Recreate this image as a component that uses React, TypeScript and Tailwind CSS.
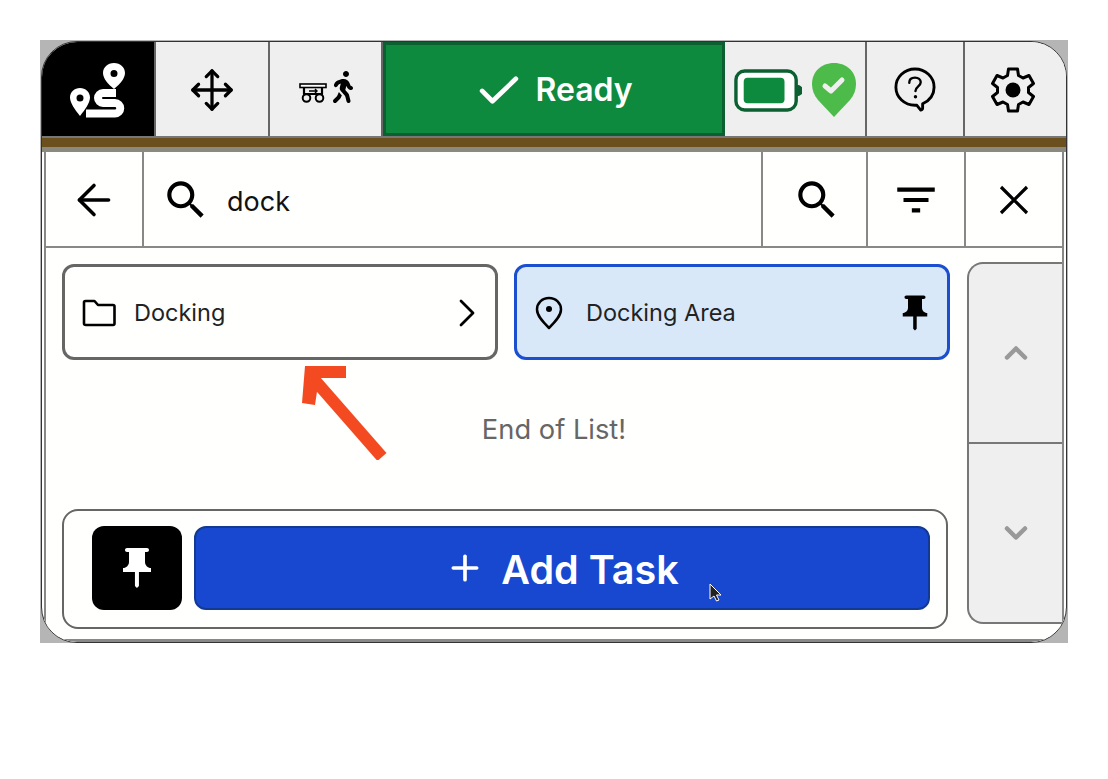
import { ArrowLeft, ChevronDown, ChevronUp, Move, Plus } from "lucide-react";
import { FaWalking } from "react-icons/fa";
import { MdFilterList, MdPushPin, MdSearch } from "react-icons/md";

const RouteIcon = () => (
  <svg width="58" height="58" viewBox="0 0 58 58" fill="none">
    <path fillRule="evenodd" fill="#fff" d="M45 2c-6.500 0-11 4.500-11 10 0 5.500 5 11 11 16 6-5 11-10.500 11-16 0-5.500-4.500-10-11-10Zm0 7a3.500 3.500 0 1 1 0 7 3.500 3.500 0 0 1 0-7Z" />
    <path fillRule="evenodd" fill="#fff" d="M11 27C5.500 27 1 31 1 36.500c0 5.500 5 12 10 18.500 5-6.500 10-13 10-18.500C21 31 16.500 27 11 27Zm0 6.500a3.500 3.500 0 1 1 0 7 3.500 3.500 0 0 1 0-7Z" />
    <path stroke="#fff" strokeWidth="8" strokeLinejoin="round" d="M47 32H34a5 5 0 0 0 0 10h12a5 5 0 0 1 0 10.500H17" />
  </svg>
);

const CartIcon = () => (
  <svg width="28" height="20" viewBox="0 0 28 20" fill="none" stroke="#000">
    <rect x="1" y="1" width="26" height="3.500" strokeWidth="1.600" fill="#fff" />
    <path strokeWidth="2.200" d="M5 5v6m18-6v6M4 11h20" />
    <path strokeWidth="1.400" d="M10 8h8m-2-2 2 2-2 2" />
    <circle cx="7.500" cy="15" r="3.800" strokeWidth="2" fill="#efefef" />
    <circle cx="20.500" cy="15" r="3.800" strokeWidth="2" fill="#efefef" />
  </svg>
);

const BatteryIcon = () => (
  <svg width="68" height="43" viewBox="0 0 70 44" fill="none">
    <rect x="2" y="2" width="62" height="40" rx="9" fill="#fff" stroke="#0b5f30" strokeWidth="3.500" />
    <rect x="10" y="9" width="42" height="26" rx="4" fill="#0d8a3e" />
    <path d="M65 16a6 6 0 0 1 0 12Z" fill="#0b5f30" />
  </svg>
);

const StatusPin = () => (
  <svg width="46" height="56" viewBox="0 0 46 56">
    <path fill="#4cbb4a" d="M23 1C10 1 1 10 1 22c0 6 2 11 6 16l16 17 16-17c4-5 6-10 6-16C45 10 36 1 23 1Z" />
    <path fill="none" stroke="#efefef" strokeWidth="5" strokeLinecap="round" strokeLinejoin="round" d="m14 24 6 5 11-11" />
  </svg>
);

const HelpIcon = () => (
  <svg width="42" height="46" viewBox="0 0 44 48" fill="none" stroke="#000">
    <path strokeWidth="3" strokeLinejoin="round" d="M22 2C11 2 2 10.500 2 21s9 19 20 19h2l4 5c1 0 2-1 2-2v-4.500C37 35 42 29 42 21 42 10.500 33 2 22 2Z" />
    <path strokeWidth="2.500" strokeLinecap="round" d="M16 16.500c0-3.500 2.500-5.500 6-5.500s6 2 6 5c0 4-5.500 4.500-5.500 9" />
    <circle cx="22.500" cy="31" r="1.800" fill="#000" stroke="none" />
  </svg>
);

const GearIcon = () => (
  <svg width="46" height="46" viewBox="0 0 46 46" fill="none" stroke="#000">
    <path strokeWidth="3" strokeLinejoin="round" d="M18.500 2h9l1 6.500 4.500 2.500 6-2.500 4.500 8-5 4v5l5 4-4.500 8-6-2.500-4.500 2.500-1 6.500h-9l-1-6.500-4.500-2.500-6 2.500-4.500-8 5-4v-5l-5-4 4.500-8 6 2.500 4.500-2.500Z" />
    <circle cx="23" cy="23" r="7.500" fill="#000" stroke="none" />
  </svg>
);

const FolderIcon = () => (
  <svg width="34" height="28" viewBox="0 0 34 28" fill="none">
    <path stroke="#000" strokeWidth="2.600" strokeLinejoin="round" d="M2 3.500c0-1 .5-1.500 1.500-1.500h9l3.500 4h15c1 0 1.500.5 1.500 1.500v17c0 1-.5 1.500-1.500 1.500h-27C2.500 26 2 25.500 2 24.500Z" />
  </svg>
);

const Chevron = () => (
  <svg width="18" height="28" viewBox="0 0 18 28" fill="none">
    <path stroke="#000" strokeWidth="2.800" strokeLinecap="round" strokeLinejoin="round" d="m3 2 12 12L3 26" />
  </svg>
);

const CloseIcon = () => (
  <svg width="30" height="30" viewBox="0 0 30 30" fill="none">
    <path stroke="#000" strokeWidth="3.200" d="m2 2 26 26M28 2 2 28" />
  </svg>
);

const MapPinDot = () => (
  <svg width="28" height="34" viewBox="0 0 28 34" fill="none">
    <path stroke="#000" strokeWidth="2.500" strokeLinejoin="round" d="M14 2C7 2 2 7 2 13.500c0 6 5 11.500 12 18.500 7-7 12-12.500 12-18.500C26 7 21 2 14 2Z" />
    <circle cx="14" cy="13" r="3" fill="#000" />
  </svg>
);

const BarCell = ({ width, children }: { width: string; children: React.ReactNode }) => (
  <div className={`${width} flex items-center justify-center pt-[2px] bg-[#efefef] border-r-2 border-[#666]`}>{children}</div>
);

export default function App() {
  return (
    <div className="w-[1108px] h-[779px] bg-white pl-[40px] pt-[40px] font-['Inter',sans-serif] overflow-hidden">
      <div className="relative w-[1028px] h-[603px] bg-[#b5b5b5] px-[1px] pt-[1px]">
        <div className="w-full h-full flex flex-col bg-[#fffffd] rounded-[36px] border border-[#333] overflow-hidden">
          {/* top bar */}
          <div className="h-[94px] flex shrink-0">
            <div className="w-[114px] flex items-center justify-center pt-[2px] bg-black border-r-2 border-[#666]">
              <RouteIcon />
            </div>
            <BarCell width="w-[114px]">
              <Move size={46} strokeWidth={1.700} />
            </BarCell>
            <BarCell width="w-[113px]">
              <div className="flex items-end pl-[6px] -mt-[6px]">
                <CartIcon />
                <FaWalking size={32} />
              </div>
            </BarCell>
            <div className="w-[342px] flex items-center justify-center gap-[16px] pt-[2px] pl-[4px] bg-[#0d8a3e] border-[3px] border-[#0b5f30] text-white text-[32px] font-semibold">
              <svg width="40" height="30" viewBox="0 0 42 32" fill="none">
                <path stroke="#fff" strokeWidth="5" strokeLinecap="round" strokeLinejoin="round" d="m3 17 11 11L39 4" />
              </svg>
              Ready
            </div>
            <BarCell width="w-[142px]">
              <div className="flex items-center gap-[9px]">
                <BatteryIcon />
                <StatusPin />
              </div>
            </BarCell>
            <BarCell width="w-[98px]">
              <HelpIcon />
            </BarCell>
            <div className="flex-1 flex items-center justify-center pt-[2px] pr-[6px] bg-[#efefef]">
              <GearIcon />
            </div>
          </div>
          {/* strip */}
          <div className="h-[16px] shrink-0 bg-[#6b4f1d] border-t-2 border-b-[5px] border-t-[#777] border-b-[#8a8a80]" />

          {/* panel */}
          <div className="flex-1 flex flex-col min-h-0 mx-[2px] border-x-2 border-b-[3px] border-[#888] bg-[#fffffd]">
            <div className="h-[96px] flex shrink-0 border-b-2 border-[#888]">
              <div className="w-[98px] flex items-center justify-center pt-[2px] border-r-2 border-[#888]">
                <ArrowLeft size={50} strokeWidth={1.700} />
              </div>
              <div className="flex-1 flex items-center gap-[16px] pl-[17px] pt-[2px]">
                <MdSearch size={50} />
                <span className="text-[27px] text-[#111] mt-[4px]">dock</span>
              </div>
              <div className="w-[107px] flex items-center justify-center pl-[5px] pt-[2px] border-x-2 border-[#888]">
                <MdSearch size={50} />
              </div>
              <div className="w-[98px] flex items-center justify-center pt-[2px] border-r-2 border-[#888]">
                <MdFilterList size={50} />
              </div>
              <div className="w-[96px] flex items-center justify-center pt-[2px]">
                <CloseIcon />
              </div>
            </div>

            <div className="flex-1 flex min-h-0">
              <div className="w-[921px] flex flex-col pl-[16px] pt-[16px] pb-[10px]">
                <div className="flex gap-[16px]">
                  <div className="w-[436px] h-[96px] flex items-center gap-[18px] pl-[17px] pr-[19px] pt-[2px] rounded-[12px] border-[3px] border-[#666] text-[23.500px] text-[#222]">
                    <FolderIcon />
                    <span className="flex-1">Docking</span>
                    <Chevron />
                  </div>
                  <div className="w-[436px] h-[96px] flex items-center gap-[23px] pl-[18px] pr-[11px] pt-[2px] rounded-[12px] border-[3px] border-[#1a4fd0] bg-[#d9e8f9] text-[23.500px] text-[#222]">
                    <MapPinDot />
                    <span className="flex-1">Docking Area</span>
                    <MdPushPin size={42} color="#000" />
                  </div>
                </div>
                <div className="flex-1 flex items-center justify-center pl-[79px] pb-[8px] text-[27.300px] text-[#666]">
                  End of List!
                </div>
                <div className="w-[886px] h-[120px] flex items-center gap-[12px] pl-[28px] pr-[16px] pb-[2px] rounded-[16px] border-2 border-[#666]">
                  <div className="w-[90px] h-[84px] flex items-center justify-center rounded-[12px] bg-black">
                    <MdPushPin size={48} color="#fff" />
                  </div>
                  <div className="flex-1 h-[84px] flex items-center justify-center gap-[16px] rounded-[12px] bg-[#1848d0] border-2 border-[#123a94] text-white text-[39.500px] font-semibold">
                    <Plus size={40} strokeWidth={2.200} />
                    <span className="mt-[5px]">Add Task</span>
                  </div>
                </div>
              </div>
              <div className="flex-1 flex flex-col mt-[14px] mb-[15px]">
                <div className="flex-1 flex items-center justify-center bg-[#efefef] rounded-tl-[16px] border-l-2 border-t-2 border-[#777]">
                  <ChevronUp size={36} strokeWidth={3} color="#999" />
                </div>
                <div className="flex-1 flex items-center justify-center bg-[#efefef] rounded-bl-[16px] border-2 border-r-0 border-[#777]">
                  <ChevronDown size={36} strokeWidth={3} color="#999" />
                </div>
              </div>
            </div>
          </div>
        </div>

        {/* annotation arrow */}
        <svg className="absolute left-[250px] top-[320px]" width="100" height="100" viewBox="0 0 100 100" fill="none">
          <path stroke="#f44a22" strokeWidth="12" d="M92 97 22 17" />
          <path fill="#f44a22" d="M15 6h41v12H29l-4 27-13-2Z" />
        </svg>
        {/* mouse cursor */}
        <svg className="absolute left-[669px] top-[543px]" width="14" height="20" viewBox="0 0 14 20">
          <path fill="#222" stroke="#fff" strokeWidth="1" d="M1 1v15l4-3 2.500 5 2.500-1-2.500-5H12Z" />
        </svg>
      </div>
    </div>
  );
}
